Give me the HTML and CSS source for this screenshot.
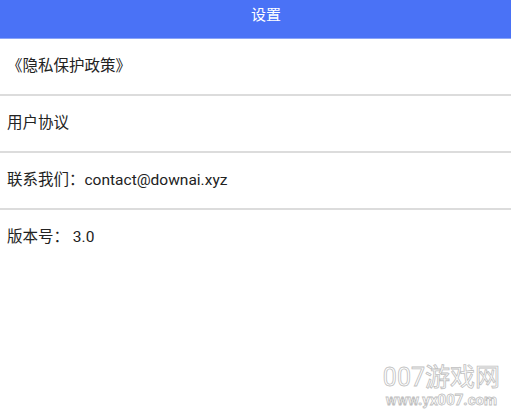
FILE: index.html
```html
<!DOCTYPE html>
<html lang="zh-CN">
<head>
    <meta charset="UTF-8">
    <meta name="viewport" content="width=device-width, initial-scale=1.0">
    <title>设置</title>
    <link rel="stylesheet" href="styles.css">
</head>
<body>
    <div class="header">设置</div>

    <div class="list">
        <div class="item">《隐私保护政策》</div>
        <div class="item">用户协议</div>
        <div class="item">联系我们：contact@downai.xyz</div>
        <div class="item last">版本号： 3.0</div>
    </div>

    <div class="watermark">
        <div class="wm-title">007游戏网</div>
        <div class="wm-url">www.yx007.com</div>
    </div>
</body>
</html>
```

FILE: styles.css
```css
* {
    margin: 0;
    padding: 0;
    box-sizing: border-box;
}

body {
    font-family: Roboto, "Noto Sans CJK SC", sans-serif;
    background: white;
    color: #222;
    width: 511px;
    height: 417px;
    overflow: hidden;
    position: relative;
}

.header {
    height: 39px;
    background: #4a72f6;
    border-bottom: 1px solid #8aa4f8;
    color: white;
    font-size: 15px;
    text-align: center;
    line-height: 31px;
    padding-left: 21px;
}

.item {
    height: 57px;
    border-bottom: 2px solid #dcdcdc;
    font-size: 15.5px;
    padding-left: 7px;
    line-height: 54px;
}

.item.last {
    border-bottom: none;
}

.watermark {
    position: absolute;
    right: 11px;
    bottom: 9px;
    text-align: center;
    color: white;
    -webkit-text-stroke: 0.8px #c0c0c0;
}

.wm-title {
    font-size: 25px;
    line-height: 28px;
}

.wm-url {
    font-size: 15px;
    font-weight: bold;
    line-height: 16px;
}
```
